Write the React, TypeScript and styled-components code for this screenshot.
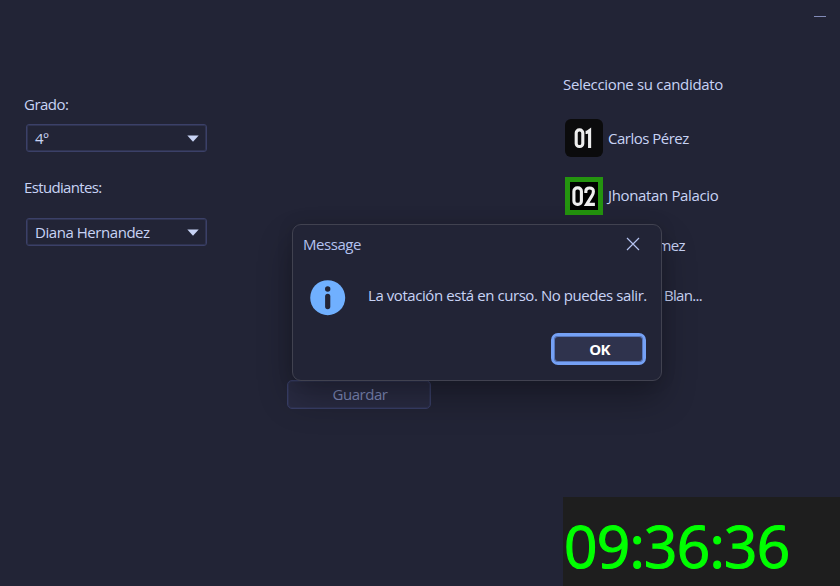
import React from "react";
import styled, { createGlobalStyle, css } from "styled-components";

const GlobalStyle = createGlobalStyle`
  * { box-sizing: border-box; }
  body {
    margin: 0;
    background: #222436;
    color: #c8d3f5;
    font-family: "Open Sans", "Noto Sans", sans-serif;
    font-size: 15px;
    line-height: 20px;
    overflow: hidden;
  }
`;

const Window = styled.main`
  width: 840px;
  height: 586px;
  display: grid;
  grid-template-rows: 32px 465px 89px;
  background: #222436;
  overflow: hidden;
`;

const TitleBar = styled.header`
  display: flex;
  justify-content: flex-end;
  align-items: center;
  padding-right: 14px;
`;

const Minimize = styled.button`
  width: 12px;
  height: 1px;
  padding: 0;
  border: 0;
  background: #828bb8;
`;

const Content = styled.div`
  display: grid;
  grid-template-columns: 287px 276px 277px;
`;

const Form = styled.section`
  display: flex;
  flex-direction: column;
  align-items: flex-start;
  padding: 62px 0 0 24px;
`;

const Text = styled.span<{ $spacing?: number }>`
  white-space: nowrap;
  letter-spacing: ${(p) => p.$spacing ?? -0.45}px;
`;

const Select = styled.div<{ $top: number; $bottom?: number }>`
  width: 181px;
  height: 28px;
  margin: ${(p) => p.$top}px 0 ${(p) => p.$bottom ?? 0}px 2px;
  padding: 0 7px 0 8px;
  display: flex;
  align-items: center;
  justify-content: space-between;
  border: 1px solid #3b4068;
  border-radius: 3px;
  box-shadow: inset 0 0 0 1px #2f3350;
`;

const Center = styled.section`
  display: flex;
  align-items: flex-start;
  padding-top: 348px;
`;

const SaveButton = styled.button`
  width: 144px;
  height: 29px;
  padding: 0 0 2px 2px;
  border: 1px solid #383e66;
  border-radius: 5px;
  box-shadow: inset 0 0 0 1px #2e3250;
  background: #292b42;
  color: #7f8aba;
  font: inherit;
`;

const Candidates = styled.section`
  display: flex;
  flex-direction: column;
  padding-top: 42px;
`;

const Candidate = styled.div<{ $height: number; $indent?: number }>`
  height: ${(p) => p.$height}px;
  display: flex;
  align-items: center;
  gap: 5px;
  padding-left: ${(p) => p.$indent ?? 2}px;
`;

const Badge = styled.span<{ $selected?: boolean }>`
  width: 38px;
  height: 38px;
  flex: none;
  display: flex;
  align-items: center;
  justify-content: center;
  background: #0b0b0c;
  border-radius: 6px;
  ${(p) =>
    p.$selected &&
    css`
      margin-top: 2px;
      background: #000;
      border: 5px solid #24940f;
      border-radius: 0;
    `}
`;

const Numerals = styled.svg`
  width: 28px;
  height: 24px;
  flex: none;
  fill: none;
  stroke: #eeeeee;
  stroke-width: 3.1;
`;

const Footer = styled.footer`
  display: flex;
  justify-content: flex-end;
`;

const Clock = styled.time`
  width: 277px;
  height: 89px;
  padding: 8px 0 0 1px;
  background: #1e1e1e;
  color: #00ff00;
  font-size: 58.5px;
  line-height: 81px;
  letter-spacing: -0.75px;
  -webkit-text-stroke: 1.2px #00ff00;
  white-space: nowrap;
`;

const Dialog = styled.div`
  position: absolute;
  left: 292px;
  top: 224px;
  width: 370px;
  height: 157px;
  display: flex;
  flex-direction: column;
  border: 1px solid #414250;
  border-radius: 9px;
  background: #222436;
  box-shadow: 0 18px 34px rgba(0, 0, 0, 0.28), 0 0 16px rgba(0, 0, 0, 0.12);
`;

const DialogHeader = styled.div`
  height: 38px;
  display: flex;
  align-items: center;
  justify-content: space-between;
  padding: 0 21px 0 10px;
  color: #b4c2f0;
`;

const DialogBody = styled.div`
  height: 68px;
  display: flex;
  align-items: center;
  gap: 22px;
  padding: 0 0 4px 17px;
`;

const InfoIcon = styled.svg`
  width: 36px;
  height: 36px;
  margin-top: 6px;
`;

const DialogActions = styled.div`
  display: flex;
  justify-content: flex-end;
  padding: 2px 15px 0 0;
`;

const OkButton = styled.button`
  width: 95px;
  height: 32px;
  padding: 0 0 0 2px;
  border: 3px solid #75a1f5;
  border-radius: 7px;
  box-shadow: inset 0 0 0 1px #5878bd;
  background: #2f334d;
  color: #fff;
  font: inherit;
  font-weight: 700;
`;

const Arrow = () => (
  <svg width="12" height="7" viewBox="0 0 12 7">
    <path d="M.3.5h11.4L6 6.7z" fill="#c8d3f5" />
  </svg>
);

const NumberOne = () => (
  <Numerals viewBox="0 0 28 24">
    <rect x="6.2" y="3.9" width="6.6" height="16.6" rx="3.1" />
    <path d="M15.6 6.4h1.2l2.8-2V22" />
  </Numerals>
);

const NumberTwo = () => (
  <Numerals viewBox="0 0 28 24">
    <rect x="3.9" y="3.9" width="7.5" height="16.5" rx="3.4" />
    <path d="M15.8 9V7.5q0-3.5 3.8-3.5t3.8 3.5q0 2.2-1.5 4.4L16.6 20.4h8.3" />
  </Numerals>
);

export default function App() {
  return (
    <Window>
      <GlobalStyle />
      <TitleBar>
        <Minimize aria-label="Minimizar" />
      </TitleBar>
      <Content>
        <Form>
          <Text $spacing={-0.5}>Grado:</Text>
          <Select $top={10} $bottom={25}>
            <Text>4º</Text>
            <Arrow />
          </Select>
          <Text $spacing={-0.65}>Estudiantes:</Text>
          <Select $top={21}>
            <Text>Diana Hernandez</Text>
            <Arrow />
          </Select>
        </Form>
        <Center>
          <SaveButton>
            <Text>Guardar</Text>
          </SaveButton>
        </Center>
        <Candidates>
          <Text $spacing={-0.32}>Seleccione su candidato</Text>
          <Candidate $height={87}>
            <Badge>
              <NumberOne />
            </Badge>
            <Text $spacing={-0.5}>Carlos Pérez</Text>
          </Candidate>
          <Candidate $height={28}>
            <Badge $selected>
              <NumberTwo />
            </Badge>
            <Text $spacing={-0.35}>Jhonatan Palacio</Text>
          </Candidate>
          <Candidate $height={71} $indent={76}>
            <Text $spacing={-0.7}>Gómez</Text>
          </Candidate>
          <Candidate $height={29} $indent={101}>
            <Text $spacing={-0.7}>Blan...</Text>
          </Candidate>
        </Candidates>
      </Content>
      <Footer>
        <Clock>09:36:36</Clock>
      </Footer>
      <Dialog role="dialog">
        <DialogHeader>
          <Text>Message</Text>
          <svg width="14" height="14" viewBox="0 0 14 14">
            <path d="M1 1l12 12M13 1L1 13" stroke="#b4c2f0" strokeWidth="1.2" fill="none" />
          </svg>
        </DialogHeader>
        <DialogBody>
          <InfoIcon viewBox="0 0 36 36">
            <circle cx="17.7" cy="17.7" r="17.5" fill="#70b0ff" />
            <circle cx="17.7" cy="9" r="2.7" fill="#222436" />
            <rect x="15.1" y="13.8" width="5.2" height="15.4" rx="2.6" fill="#222436" />
          </InfoIcon>
          <Text $spacing={-0.43}>La votación está en curso. No puedes salir.</Text>
        </DialogBody>
        <DialogActions>
          <OkButton>
            <Text $spacing={-0.8}>OK</Text>
          </OkButton>
        </DialogActions>
      </Dialog>
    </Window>
  );
}
